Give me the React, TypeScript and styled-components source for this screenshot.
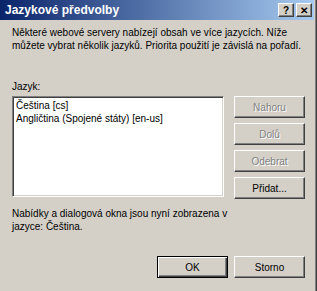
import React from "react";
import styled, { createGlobalStyle } from "styled-components";

const Global = createGlobalStyle`
  html, body { margin: 0; padding: 0; background: #d4d0c8; }
  body { font-family: "Liberation Sans", Arial, sans-serif; font-size: 10px; color: #000; }
`;

const Window = styled.div`
  width: 317px;
  height: 291px;
  box-sizing: border-box;
  background: #d4d0c8;
  border-right: 1px solid #404040;
  box-shadow: inset -1px 0 #808080;
  padding-right: 2px;
  display: flex;
  flex-direction: column;
`;

const TitleBar = styled.div`
  height: 20px;
  display: flex;
  align-items: center;
  padding: 0 2px 0 5px;
  background: linear-gradient(to right, #0a246a, #a6caf0);
  color: #fff;
  font-weight: bold;
  font-size: 12px;
`;

const TitleText = styled.span`
  flex: 1;
`;

const CaptionButton = styled.div<{ $gap?: boolean }>`
  width: 16px;
  height: 14px;
  box-sizing: border-box;
  margin-left: ${(p) => (p.$gap ? "2px" : "0")};
  background: #d4d0c8;
  border: 1px solid;
  border-color: #fff #404040 #404040 #fff;
  box-shadow: inset -1px -1px #808080;
  display: flex;
  align-items: center;
  justify-content: center;
  color: #000;
  font-weight: bold;
  font-size: 10px;
`;

const Body = styled.div`
  flex: 1;
  display: flex;
  flex-direction: column;
  padding: 6px 9px 0 12px;
`;

const Para = styled.p<{ $top?: number }>`
  margin: ${(p) => p.$top ?? 0}px 0 0 0;
  line-height: 13px;
`;

const Row = styled.div`
  display: flex;
  gap: 10px;
  margin-top: 3px;
`;

const ListBox = styled.div`
  width: 213px;
  height: 101px;
  box-sizing: border-box;
  background: #fff;
  border: 1px solid;
  border-color: #808080 #fff #fff #808080;
  box-shadow: inset 1px 1px #404040, inset -1px -1px #d4d0c8;
  padding: 2px 3px;
`;

const ListItem = styled.div`
  line-height: 13px;
  white-space: nowrap;
`;

const ButtonColumn = styled.div`
  display: flex;
  flex-direction: column;
  gap: 5px;
`;

const Button = styled.div<{ $disabled?: boolean; $default?: boolean }>`
  width: 71px;
  height: 22px;
  box-sizing: border-box;
  background: #d4d0c8;
  border: 1px solid;
  border-color: ${(p) => (p.$default ? "#000" : "#fff #404040 #404040 #fff")};
  box-shadow: ${(p) =>
    p.$default
      ? "inset 1px 1px #fff, inset -1px -1px #404040, inset -2px -2px #808080"
      : "inset -1px -1px #808080"};
  display: flex;
  align-items: center;
  justify-content: center;
  color: ${(p) => (p.$disabled ? "#808080" : "#000")};
  text-shadow: ${(p) => (p.$disabled ? "1px 1px #fff" : "none")};
`;

const Footer = styled.div`
  display: flex;
  justify-content: flex-end;
  gap: 6px;
  margin-top: 23px;
`;

export default function App() {
  return (
    <>
      <Global />
      <Window>
        <TitleBar>
          <TitleText>Jazykové předvolby</TitleText>
          <CaptionButton>?</CaptionButton>
          <CaptionButton $gap>✕</CaptionButton>
        </TitleBar>
        <Body>
          <Para>
            Některé webové servery nabízejí obsah ve více jazycích. Níže
            <br />
            můžete vybrat několik jazyků. Priorita použití je závislá na pořadí.
          </Para>
          <Para $top={28}>Jazyk:</Para>
          <Row>
            <ListBox>
              <ListItem>Čeština [cs]</ListItem>
              <ListItem>Angličtina (Spojené státy) [en-us]</ListItem>
            </ListBox>
            <ButtonColumn>
              <Button $disabled>Nahoru</Button>
              <Button $disabled>Dolů</Button>
              <Button $disabled>Odebrat</Button>
              <Button>Přidat...</Button>
            </ButtonColumn>
          </Row>
          <Para $top={8}>
            Nabídky a dialogová okna jsou nyní zobrazena v
            <br />
            jazyce: Čeština.
          </Para>
          <Footer>
            <Button $default>OK</Button>
            <Button>Storno</Button>
          </Footer>
        </Body>
      </Window>
    </>
  );
}
